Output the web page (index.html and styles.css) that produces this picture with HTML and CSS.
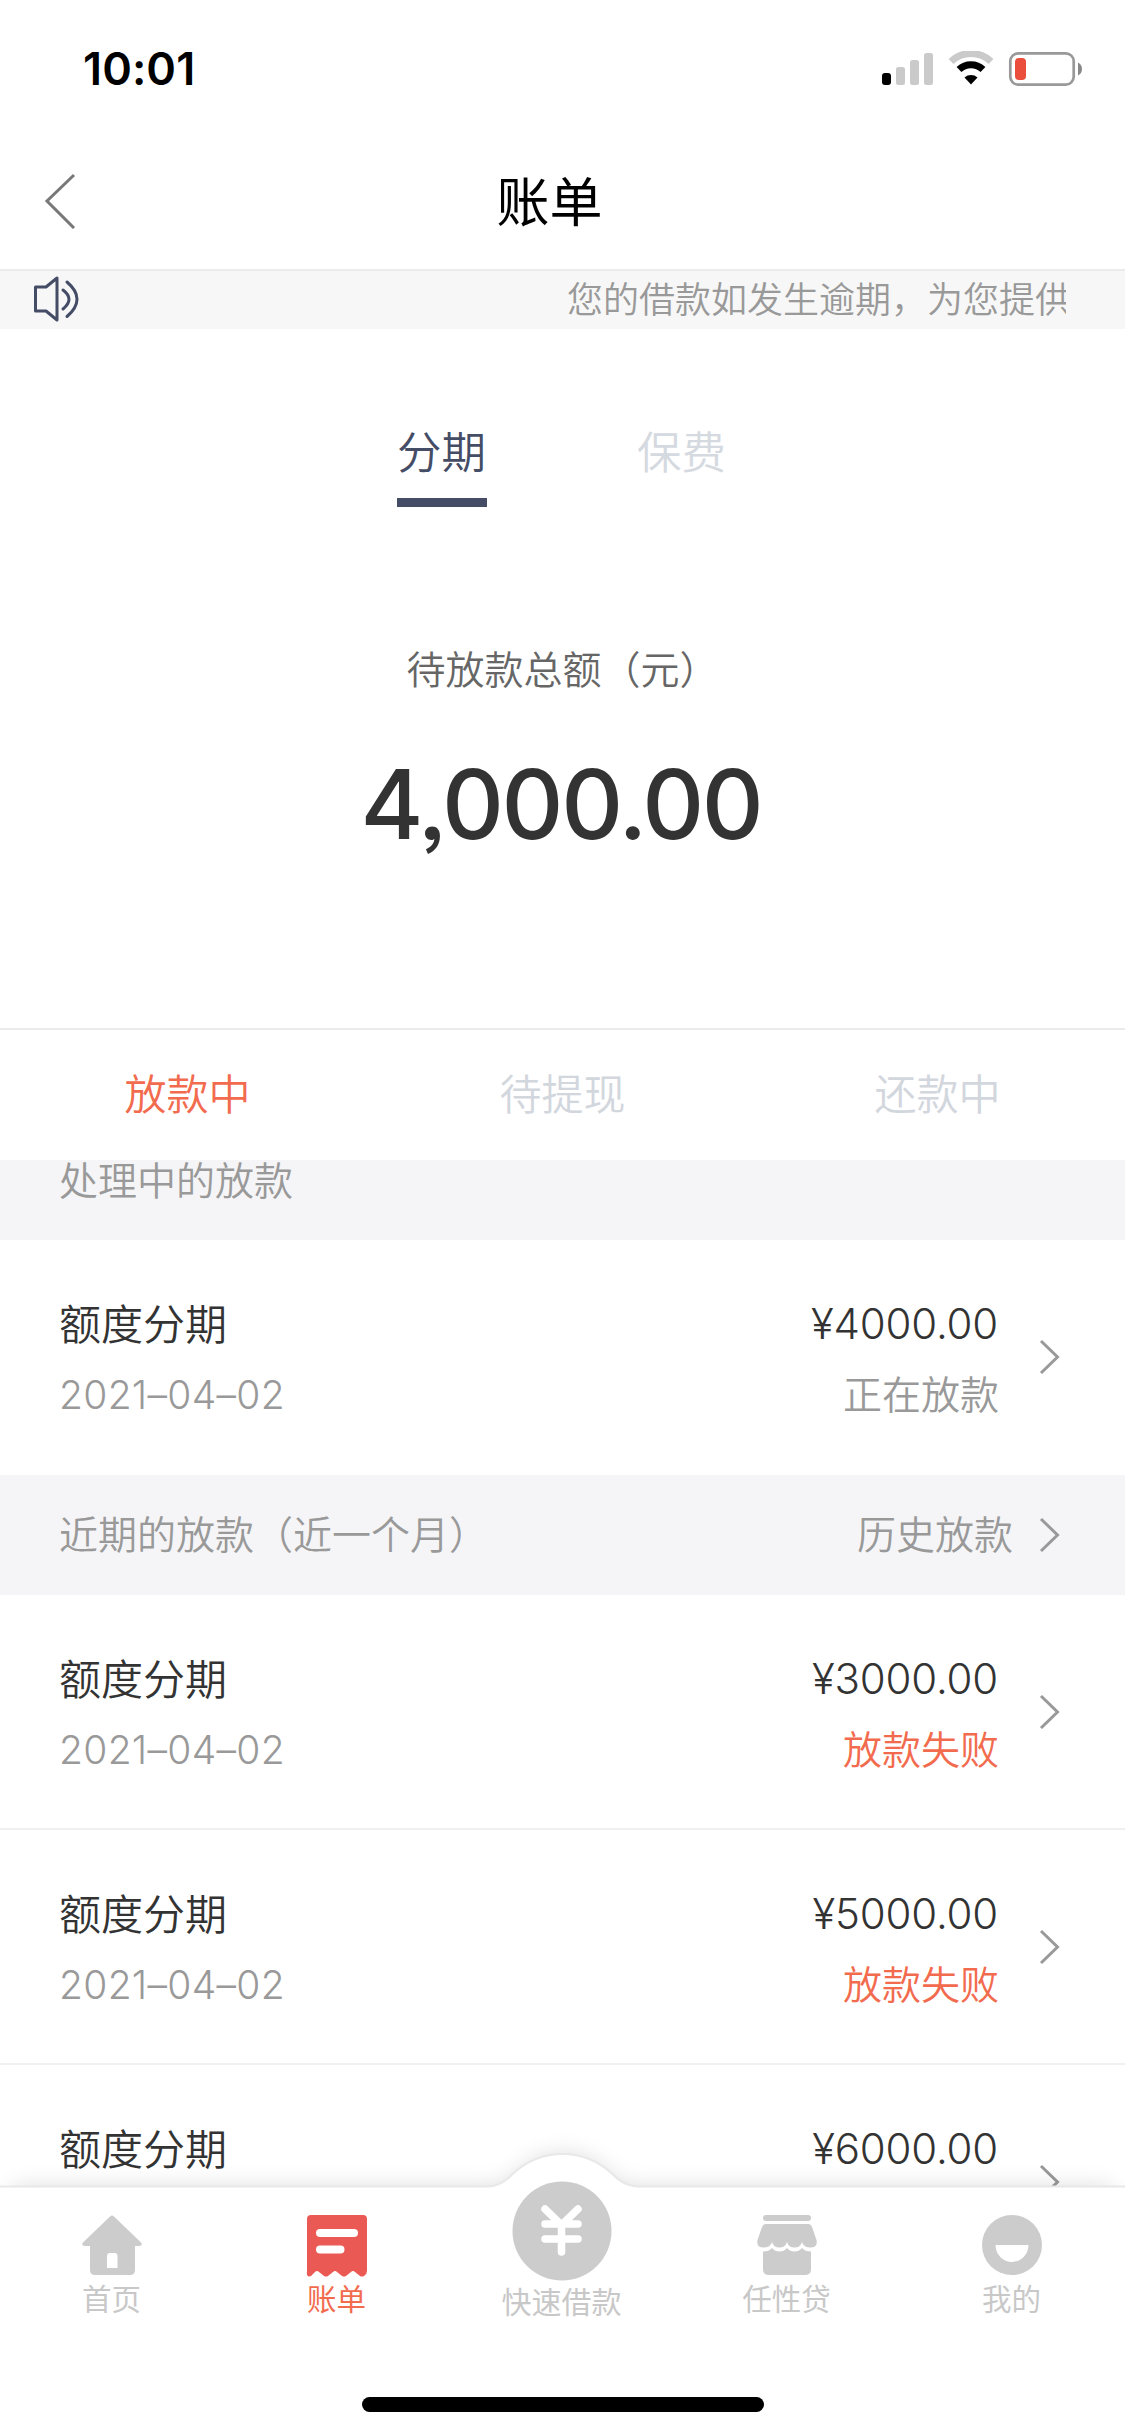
FILE: index.html
```html
<!DOCTYPE html>
<html lang="zh-CN">
<head>
<meta charset="utf-8">
<title>账单</title>
<link rel="stylesheet" href="styles.css">
</head>
<body>
<div class="screen">
  <header class="status">
    <span class="clock">10:01</span>
    <svg class="status-icons" width="204" height="36" viewBox="0 0 204 36">
      <rect x="0" y="22" width="9" height="12" rx="3" fill="#000"/>
      <g fill="#cacaca">
        <rect x="14" y="16" width="9" height="18" rx="2.5"/>
        <rect x="28" y="9" width="9" height="25" rx="2.5"/>
        <rect x="42" y="2" width="9" height="32" rx="2.5"/>
      </g>
      <g fill="none">
        <path d="M69 10.500a29 29 0 0 1 40 0" stroke="#cacaca" stroke-width="7"/>
        <path d="M77 18.500a17.500 17.500 0 0 1 24 0" stroke="#000" stroke-width="7"/>
      </g>
      <path d="M82.500 26.500a10 10 0 0 1 13 0l-6.500 7z" fill="#000"/>
      <rect x="128.300" y="2.300" width="63.400" height="31.400" rx="8" fill="none" stroke="#999" stroke-width="2.700"/>
      <rect x="133" y="7" width="11" height="22" rx="4" fill="#eb4d3d"/>
      <path d="M196 11.500q4 2 4 6.500t-4 6.500z" fill="#888"/>
    </svg>
  </header>
  <nav class="titlebar">
    <svg class="back" width="32" height="56" viewBox="0 0 32 56"><path d="M30 2L3 28l27 27" fill="none" stroke="#787878" stroke-width="3"/></svg>
    <h1 class="title">账单</h1>
  </nav>
  <div class="notice">
    <svg width="48" height="46" viewBox="0 0 48 46" fill="none" stroke="#454d66" stroke-width="3" stroke-linecap="round" stroke-linejoin="round">
      <path d="M2.500 11H13L24 2V44L13 35H2.500z"/><path d="M30 14q12 9 0 19M34 6q20 17 0 34.500"/>
    </svg>
    <div class="marquee">您的借款如发生逾期，为您提供</div>
  </div>
  <section class="summary">
    <div class="kinds"><span class="kind kind-on">分期</span><span class="kind">保费</span></div>
    <div class="label">待放款总额（元）</div>
    <div class="amount">4,000.00</div>
  </section>
  <div class="stages"><span class="stage-on">放款中</span><span>待提现</span><span>还款中</span></div>
  <main class="list">
    <div class="group group-first"><span>处理中的放款</span></div>
    <div class="row row-last">
      <div class="info"><span class="name">额度分期</span><span class="date">2021–04–02</span></div>
      <div class="info info-end"><span class="price">¥4000.00</span><span class="state">正在放款</span></div>
      <svg class="chev" width="22" height="36" viewBox="0 0 22 36"><path d="M2 2l16.500 16L2 34"/></svg>
    </div>
    <div class="group"><span>近期的放款（近一个月）</span><span class="history">历史放款</span>
      <svg class="chev" width="22" height="36" viewBox="0 0 22 36"><path d="M2 2l16.500 16L2 34"/></svg>
    </div>
    <div class="row">
      <div class="info"><span class="name">额度分期</span><span class="date">2021–04–02</span></div>
      <div class="info info-end"><span class="price">¥3000.00</span><span class="state failed">放款失败</span></div>
      <svg class="chev" width="22" height="36" viewBox="0 0 22 36"><path d="M2 2l16.500 16L2 34"/></svg>
    </div>
    <div class="row">
      <div class="info"><span class="name">额度分期</span><span class="date">2021–04–02</span></div>
      <div class="info info-end"><span class="price">¥5000.00</span><span class="state failed">放款失败</span></div>
      <svg class="chev" width="22" height="36" viewBox="0 0 22 36"><path d="M2 2l16.500 16L2 34"/></svg>
    </div>
    <div class="row row-cut">
      <div class="info"><span class="name">额度分期</span></div>
      <div class="info info-end"><span class="price">¥6000.00</span></div>
      <svg class="chev" width="22" height="36" viewBox="0 0 22 36"><path d="M2 2l16.500 16L2 34"/></svg>
    </div>
  </main>
  <footer class="dock">
    <svg class="dock-shape" width="1125" height="310" viewBox="0 0 1125 310">
      <defs>
        <filter id="lift" x="-20" y="-50" width="1165" height="400" filterUnits="userSpaceOnUse"><feGaussianBlur stdDeviation="12"/></filter>
      </defs>
      <path d="M12 62H494q13-1 22-11 20-22 47-22t47 22q9 10 22 11H1113V300H12z" fill="#000" opacity=".15" filter="url(#lift)"/>
      <path d="M-4 60.500H488q14-1 24-12 22-20.500 50.500-20.500t50.500 20.500q10 11 24 12H1130V316H-4z" fill="#fff" stroke="#e8e8e8" stroke-width="2"/>
    </svg>
    <div class="tabs">
      <a class="tab"><svg width="60" height="60" viewBox="0 0 60 60"><path d="M28 1.500q2-2 4 0L59.500 28q1 3-2 3H53V55q0 5-5 5H13q-5 0-5-5V31H2.500q-3 0-2-3zM25 41V53H35.500V41q0-3-3-3h-4.500q-3 0-3 3z" fill="#ccc" fill-rule="evenodd"/></svg><span>首页</span></a>
      <a class="tab tab-on"><svg width="62" height="62" viewBox="0 0 62 62"><path d="M5 0H57q4 0 4 4V56q0 3-3 5-2 1-4 0l-5-4q-2-2-4 0l-5 4q-2 1-4 0l-5-4q-2-2-4 0l-5 4q-2 1-4 0l-5-4q-2-2-4 0l-4 4Q0 63 1 56V4Q1 0 5 0z" fill="#eb5954"/><path d="M14 18H48M14 34.500H34.500" stroke="#fff" stroke-width="8" stroke-linecap="round"/></svg><span>账单</span></a>
      <a class="tab tab-mid"><svg width="100" height="100" viewBox="0 0 100 100"><circle cx="50" cy="50" r="49.500" fill="#ccc"/><path d="M33 28l16.500 16L66 28M33 43H66M33 58H66M49.500 46V71" fill="none" stroke="#fff" stroke-width="7.500" stroke-linecap="round"/></svg><span>快速借款</span></a>
      <a class="tab"><svg width="60" height="60" viewBox="0 0 60 60" fill="#ccc"><rect x="6" y="0" width="48" height="6" rx="3"/><path d="M9 9H51q3 0 4 3l4.500 13q1.500 7.500-6 7.500-7 0-8.500-5.500-1.500 5.500-7.500 5.500T30 27q-1.500 5.500-7.500 5.500T15 27q-1.500 5.500-8.500 5.500-7.500 0-6-7.500L5 12q1-3 4-3z"/><path d="M6 36.500q6 0 9-3.500 3 3.500 7.500 3.500T30 33q3 3.500 7.500 3.500T45 33q3 3.500 9 3.500V54q0 6-6 6H12q-6 0-6-6z"/></svg><span>任性贷</span></a>
      <a class="tab"><svg width="60" height="60" viewBox="0 0 60 60"><circle cx="30" cy="30" r="30" fill="#ccc"/><path d="M13.500 30H46.500a16.500 17 0 0 1-33 0z" fill="#fff"/></svg><span>我的</span></a>
    </div>
    <div class="home-bar"></div>
  </footer>
</div>
</body>
</html>
```
FILE: styles.css
```css
* { box-sizing: border-box; }
body { margin: 0; background: #fff; }
.screen {
  position: relative;
  width: 1125px;
  height: 2436px;
  overflow: hidden;
  background: #fff;
  color: #333;
  font-family: "Noto Sans CJK SC", sans-serif;
  font-weight: 350;
}
svg { display: block; flex: none; }
.status {
  height: 132px;
  padding: 5px 39px 0 83px;
  display: flex;
  justify-content: space-between;
  align-items: center;
}
.clock { font: 600 45px/60px Inter, sans-serif; color: #000; letter-spacing: .1px; }
.titlebar {
  height: 139px;
  border-bottom: 2px solid #ebebeb;
  display: flex;
  align-items: center;
  padding: 0 102px 0 44px;
}
.title { margin: 0; padding-bottom: 3px; flex: 1; text-align: center; font-size: 53px; line-height: 76px; font-weight: 400; color: #000; }
.notice {
  height: 58px;
  background: #f7f7f7;
  padding: 0 59px 2px 33px;
  display: flex;
  align-items: center;
  justify-content: space-between;
}
.marquee { width: 499px; font-size: 36px; line-height: 52px; padding-bottom: 4px; color: #999; white-space: nowrap; overflow: hidden; }
.summary { height: 699px; display: flex; flex-direction: column; align-items: center; }
.kinds { margin-top: 89px; display: flex; gap: 150px; padding-right: 1px; }
.kind { width: 90px; height: 89px; font-size: 44.500px; line-height: 64px; color: #d5d9e0; }
.kind-on { color: #454d66; border-bottom: 9px solid #454d66; }
.label { margin-top: 131px; font-size: 39px; line-height: 58px; color: #666; }
.amount { margin-top: 38px; font: 500 96px/140px Inter, sans-serif; letter-spacing: -2.400px; padding-right: 3px; font-feature-settings: "ss03"; }
.stages {
  height: 132px;
  border-top: 2px solid #ebebeb;
  display: grid;
  grid-template-columns: repeat(3, 1fr);
  text-align: center;
  font-size: 42px;
  line-height: 124px;
  color: #d2d6dd;
}
.stages .stage-on { color: #f26b4e; }
.group {
  height: 120px;
  background: #f5f5f7;
  display: flex;
  align-items: center;
  padding: 0 64px 0 59px;
  font-size: 39px;
  line-height: 58px;
  color: #999;
}
.group span { margin-top: -7px; }
.group-first { height: 80px; padding-bottom: 38px; }
.group .history { margin-left: auto; }
.group .chev { margin-left: 26px; }
.chev { fill: none; stroke: #999; stroke-width: 3; }
.row {
  height: 235px;
  border-bottom: 2px solid #f0f0f0;
  display: flex;
  align-items: center;
  padding: 0 64px 0 59px;
}
.row-last { border-bottom-color: #fff; }
.info { padding-top: 2px; display: flex; flex-direction: column; gap: 11px; flex: 1; }
.info-end { align-items: flex-end; }
.name, .price { font-size: 42px; line-height: 60px; }
.price { font-family: Inter, sans-serif; letter-spacing: -.2px; padding-top: 2px; margin-bottom: -2px; }
.date, .state { font-size: 39px; line-height: 60px; color: #999; }
.date { font-family: Inter, sans-serif; font-weight: 300; letter-spacing: .3px; padding-top: 2px; margin-bottom: -2px; }
.state { margin-top: -1px; margin-bottom: 1px; margin-right: -1px; }
.failed { color: #f26b4e; }
.row .chev { margin-left: 41px; }
.row-cut { align-items: flex-start; padding-top: 50px; }
.row-cut .chev { margin-top: 49px; }
.dock { position: absolute; left: 0; bottom: 0; width: 1125px; height: 310px; }
.dock-shape { position: absolute; left: 0; top: 0; }
.tabs { position: relative; height: 271px; margin-left: -1px; display: grid; grid-template-columns: repeat(5, 225px); }
.tab {
  display: flex;
  flex-direction: column;
  align-items: center;
  padding-top: 89px;
  font-size: 29.500px;
  line-height: 45px;
  font-weight: 400;
  color: #c8c8c8;
}
.tab-on { color: #f26b4e; }
.tab-on svg { margin-bottom: -2px; }
.tab-mid { padding-top: 55px; font-size: 30px; }
.tab-mid span { margin-top: -3px; }
.home-bar { position: relative; width: 402px; height: 15px; margin: 0 auto; border-radius: 8px; background: #000; }
```
